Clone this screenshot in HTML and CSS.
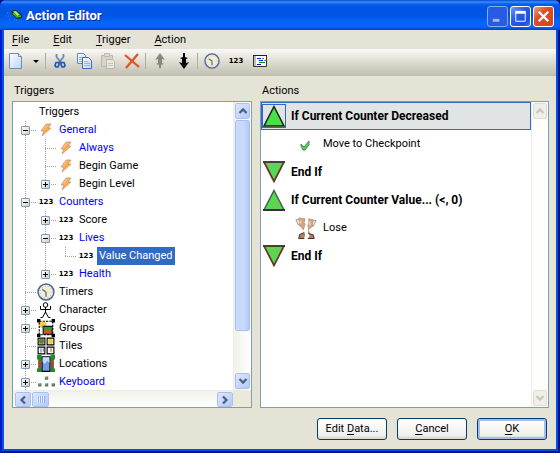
FILE: index.html
```html
<!DOCTYPE html>
<html lang="en">
<head>
<meta charset="utf-8">
<title>Action Editor</title>
<link rel="stylesheet" href="styles.css">
</head>
<body>
<svg class="defs" aria-hidden="true">
  <defs>
    <linearGradient id="boltFill" x1="0" y1="0" x2="1" y2="1"><stop offset="0" stop-color="#ffe6c0"/><stop offset=".5" stop-color="#f8a850"/><stop offset="1" stop-color="#ffd040"/></linearGradient>
    <linearGradient id="paper" x1="0" y1="0" x2="1" y2="1"><stop offset="0" stop-color="#fff"/><stop offset="1" stop-color="#b9d3fa"/></linearGradient>
    <pattern id="dots" width="4" height="4" patternUnits="userSpaceOnUse"><path fill="#48df48" d="M0 0h4v4H0z"/><path fill="#9fb592" d="M0 1h1v1H0zM2 3h1v1H2z"/></pattern>
    <symbol id="bolt" viewBox="0 0 16 16"><path d="M8 2h5l-3 4h3L4 14l2-5H3z" fill="url(#boltFill)" stroke="#c98a68" stroke-width=".7"/></symbol>
    <symbol id="clock" viewBox="0 0 17 17"><circle cx="8.500" cy="8.500" r="7.500" fill="#f1eed6" stroke="#4a62a0" stroke-width="1.400"/><circle cx="8.500" cy="8.500" r="5.500" fill="none" stroke="#c3bf9e" stroke-dasharray="1 2"/><path d="M5 6l3.500 2.500V13" fill="none" stroke="#68727c" stroke-width="1.300"/></symbol>
    <symbol id="up" viewBox="0 0 22 22"><path d="M11 1.500L21 21H1z" fill="#48df48" stroke="#112511" stroke-width="1.500"/></symbol>
    <symbol id="updots" viewBox="0 0 22 22"><path d="M11 1.500L21 21H1z" fill="url(#dots)" stroke="#48604b" stroke-width="1.500"/><path d="M0 21h22" stroke="#333" stroke-width="2"/></symbol>
    <symbol id="downdots" viewBox="0 0 22 22"><path d="M1 1h20L11 20.500z" fill="url(#dots)" stroke="#6b3328" stroke-width="1.700"/><path d="M0 1h22" stroke="#40322d" stroke-width="1.500"/></symbol>
    <symbol id="chev" viewBox="0 0 10 10"><path d="M1.500 7L5 3.500 8.500 7" fill="none" stroke="currentColor" stroke-width="2.300"/></symbol>
  </defs>
</svg>
<div class="window">
  <header class="titlebar">
    <svg class="appicon" viewBox="0 0 18 14"><path d="M1 4h4M0 7h5M3 10h2M8 11h3" stroke="#497fc4" stroke-dasharray="1 1"/><path d="M5 2l5-1 6 5v3l-5 1-5-5z" fill="#173615"/><path d="M7 2.500l3-.5 4 4-3 1z" fill="#a1ed62"/><path d="M7 4l4 4 4-1" fill="none" stroke="#45b638" stroke-width="1.500"/></svg>
    <h1>Action Editor</h1>
    <div class="controls">
      <button class="ctl min" aria-label="Minimize" disabled><svg viewBox="0 0 20 20"><path d="M5 14h7" stroke="#a4baf4" stroke-width="3"/></svg></button>
      <button class="ctl" aria-label="Maximize"><svg viewBox="0 0 20 20"><path d="M5 6h10v9H5z" fill="none" stroke="#fff"/><path d="M4.500 5.500h11" stroke="#fff" stroke-width="3"/></svg></button>
      <button class="ctl close" aria-label="Close"><svg viewBox="0 0 20 20"><path d="M5 5l10 10M15 5L5 15" stroke="#fff" stroke-width="2.500"/></svg></button>
    </div>
  </header>
  <nav class="menu">
    <button><u>F</u>ile</button><button><u>E</u>dit</button><button><u>T</u>rigger</button><button><u>A</u>ction</button>
  </nav>
  <div class="toolbar" role="toolbar">
    <button class="tool" aria-label="New"><svg viewBox="0 0 16 16"><path d="M1.500.5h9l3 3v12h-12z" fill="url(#paper)" stroke="#7189b8"/><path d="M10.500.5v3h3" fill="#dbe8fd" stroke="#7189b8"/></svg></button>
    <button class="tool drop" aria-label="New menu"><svg viewBox="0 0 8 16"><path d="M1 7h6L4 10z"/></svg></button>
    <span class="sep"></span>
    <button class="tool" aria-label="Cut"><svg viewBox="0 0 16 16"><path d="M4.500 1v3l5 6M11.500 1v3l-5 6" fill="none" stroke="#6484a8" stroke-width="1.700"/><path d="M4 9.500h3v2L6 14H4l-1-1.500zM9 9.500h3l1 3-1 1.500h-2l-1-2.500z" fill="none" stroke="#1f55b5" stroke-width="1.700"/></svg></button>
    <button class="tool" aria-label="Copy"><svg viewBox="0 0 16 16"><path d="M1.500.5h6l2 2v8h-8z" fill="url(#paper)" stroke="#6389cc"/><path d="M3 4.500h4M3 6.500h4M3 8.500h3" stroke="#8eb4eb"/><path d="M6.500 4.500h6l3 3v8h-9z" fill="url(#paper)" stroke="#426dbb"/><path d="M8 8.500h4M8 10.500h6M8 12.500h6" stroke="#8eb4eb"/></svg></button>
    <button class="tool" aria-label="Paste" disabled><svg viewBox="0 0 16 16"><path d="M1.500 2.500h11v11h-11z" fill="#d6d5c9" stroke="#b9b8ac"/><path d="M4.500.5h5v3h-5z" fill="#e1e0d6" stroke="#b9b8ac"/><path d="M6.500 6.500h6l2 2v7h-8z" fill="#e9e8df" stroke="#b9b8ac"/><path d="M8 10.500h5M8 12.500h5" stroke="#c6c5ba"/></svg></button>
    <button class="tool" aria-label="Delete"><svg viewBox="0 0 16 16"><path d="M1 2l14 12M14 1L2 15" stroke="#e0521f" stroke-width="2.200"/></svg></button>
    <span class="sep"></span>
    <button class="tool" aria-label="Move up" disabled><svg viewBox="0 0 16 16"><path d="M8 0l5 7-3-1v4l2 1-3 1v3H7v-3l-3-1 2-1V6L3 7z" fill="#858a79"/></svg></button>
    <button class="tool" aria-label="Move down"><svg viewBox="0 0 16 16"><path d="M8 16l5-7-3 1V6l2-1-3-1V0H7v4L4 5l2 1v4L3 9z"/></svg></button>
    <span class="sep"></span>
    <button class="tool" aria-label="Timer"><svg viewBox="0 0 17 17"><use href="#clock"/></svg></button>
    <button class="tool"><span class="num">123</span></button>
    <button class="tool" aria-label="Script"><svg viewBox="0 0 16 16"><path d="M1.500 2.500h13v11h-13z" fill="#fff" stroke="#333"/><path d="M2 3h2v10H2z" fill="#bcc0b8"/><path d="M1 2.500h14" stroke="#14148a"/><path d="M5 5.500h4M7 7.500h4M5 11.500h4" stroke="#11f"/><path d="M10 5.500h2M12 7.500h2" stroke="#777"/><path d="M7 9.500h6" stroke="#090"/></svg></button>
  </div>

  <main>
    <section class="col triggers">
      <h2>Triggers</h2>
      <div class="pane treepane">
        <ul class="tree">
          <li><i class="cell"></i><span class="label">Triggers</span></li>
          <li><i class="cell v h"><button aria-label="General" aria-expanded="true"></button></i><i class="cell"><svg><use href="#bolt"/></svg></i><span class="label new">General</span></li>
          <li><i class="cell v"></i><i class="cell v h"></i><i class="cell"><svg><use href="#bolt"/></svg></i><span class="label new">Always</span></li>
          <li><i class="cell v"></i><i class="cell v h"></i><i class="cell"><svg><use href="#bolt"/></svg></i><span class="label">Begin Game</span></li>
          <li><i class="cell v"></i><i class="cell e h"><button aria-label="Begin Level" aria-expanded="false"></button></i><i class="cell"><svg><use href="#bolt"/></svg></i><span class="label">Begin Level</span></li>
          <li><i class="cell v h"><button aria-label="Counters" aria-expanded="true"></button></i><i class="cell"><b class="num">123</b></i><span class="label new">Counters</span></li>
          <li><i class="cell v"></i><i class="cell v h"><button aria-label="Score" aria-expanded="false"></button></i><i class="cell"><b class="num">123</b></i><span class="label">Score</span></li>
          <li><i class="cell v"></i><i class="cell v h"><button aria-label="Lives" aria-expanded="true"></button></i><i class="cell"><b class="num">123</b></i><span class="label new">Lives</span></li>
          <li><i class="cell v"></i><i class="cell v"></i><i class="cell e h"></i><i class="cell"><b class="num">123</b></i><span class="label selected">Value Changed</span></li>
          <li><i class="cell v"></i><i class="cell e h"><button aria-label="Health" aria-expanded="false"></button></i><i class="cell"><b class="num">123</b></i><span class="label new">Health</span></li>
          <li><i class="cell v h"></i><i class="cell"><svg class="big"><use href="#clock"/></svg></i><span class="label">Timers</span></li>
          <li><i class="cell v h"><button aria-label="Character" aria-expanded="false"></button></i><i class="cell"><svg viewBox="0 0 16 16"><circle cx="7.500" cy="3" r="2.300" fill="#fff" stroke="#000"/><path d="M2.500 4v3.500h10V4M7.500 5v6M7.500 10l-3 5.500h-2M7.500 10l3 5.500h2" fill="none" stroke="#000"/></svg></i><span class="label">Character</span></li>
          <li><i class="cell v h"><button aria-label="Groups" aria-expanded="false"></button></i><i class="cell"><svg class="big" viewBox="0 0 16 16"><path d="M2 2h12v12H2z" fill="#fff" stroke="#000" stroke-dasharray="2 1"/><circle cx="5.500" cy="5.500" r="3" fill="#f7cb3c"/><path d="M5.500 6.500h8v7h-8z" fill="#c25a35" stroke="#111"/><path d="M6 7h7v2l-2 1-2-1-2 1-1-1z" fill="#2ca02d"/><path d="M0 0h3v3H0zM13 0h3v3h-3zM0 13h3v3H0zM13 13h3v3h-3z"/></svg></i><span class="label">Groups</span></li>
          <li><i class="cell v h"></i><i class="cell"><svg class="big" viewBox="0 0 16 16"><path d="M1 1h6v6H1zM9 1h6v6H9zM1 9h6v6H1zM9 9h6v6H9z" fill="#fff" stroke="#000"/><path d="M2 2h4v4H2z" fill="#b64f28"/><path d="M2 2h4v2L5 5 4 4 2 5z" fill="#2b9e2e"/><path d="M10 2h4v4h-4z" fill="#f1ca38"/><path d="M3 10h1v4H3zM5 10h1v3H5z" fill="#6786a8"/><path d="M12 10h1v3h-1z" fill="#b55e22"/></svg></i><span class="label">Tiles</span></li>
          <li><i class="cell v h"><button aria-label="Locations" aria-expanded="false"></button></i><i class="cell"><svg class="big" viewBox="0 0 16 16"><path d="M1 2h3v12H1zM12 2h3v12h-3z" fill="#8d532c"/><path d="M0 0h4v4H0zM12 0h4v4h-4zM0 12h4v3H0zM12 12h4v3h-4z" fill="#159326"/><path d="M4.500 1.500h7v13h-7z" fill="#6e9bee" stroke="#000"/><path d="M5 2h6v5L9 5 7 8 5 6z" fill="#c1dcfa"/></svg></i><span class="label">Locations</span></li>
          <li><i class="cell v h"><button aria-label="Keyboard" aria-expanded="false"></button></i><i class="cell"><svg class="big" viewBox="0 0 16 16"><path d="M7 3h3v3H7zM1 9h3v3H1zM7 9h3v3H7zM13 9h3v3h-3z" fill="#62785f"/><path d="M7 3h2v1H7zM1 9h2v1H1zM7 9h2v1H7zM13 9h2v1h-2z" fill="#b7cdb3"/></svg></i><span class="label new">Keyboard</span></li>
        </ul>
        <div class="vbar">
          <button class="arrow" aria-label="Scroll up"><svg><use href="#chev"/></svg></button>
          <div class="thumb"></div><div class="rest"></div>
          <button class="arrow down" aria-label="Scroll down"><svg><use href="#chev"/></svg></button>
        </div>
        <div class="hbar">
          <button class="arrow left" aria-label="Scroll left"><svg><use href="#chev"/></svg></button>
          <div class="thumb grip"></div><div class="rest"></div>
          <button class="arrow right" aria-label="Scroll right"><svg><use href="#chev"/></svg></button>
        </div>
        <div class="corner"></div>
      </div>
    </section>
    <section class="col actions">
      <h2>Actions</h2>
      <div class="pane actionpane">
        <ul class="list">
          <li class="current"><span class="pic"><svg><use href="#up"/></svg></span>If Current Counter Decreased</li>
          <li class="child"><span class="pic"><svg viewBox="0 0 22 22"><path d="M6 11l3 3 5-6v4l-4 5H8l-2-4z" fill="#45d556" stroke="#5d8463"/></svg></span>Move to Checkpoint</li>
          <li><span class="pic"><svg><use href="#downdots"/></svg></span>End If</li>
          <li><span class="pic"><svg><use href="#updots"/></svg></span>If Current Counter Value... (&lt;, 0)</li>
          <li class="child"><span class="pic"><svg viewBox="0 0 22 24"><path d="M3 3H0l3 6h3M19 4h3l-3 6h-3" fill="none" stroke="#899184"/><path d="M3 1l7 1-1 4 1 2-2 6-4-5z" fill="#dba37e" stroke="#9b8c78" stroke-width=".7"/><path d="M14 2l5 1-1 7-4 4-1-5 1-3z" fill="#dba37e" stroke="#9b8c78" stroke-width=".7"/><path d="M8 13l1 4-5 2-1 5h6l1-5M14 13l-1 5 2 2-2 4h7l-1-5-4-1z" fill="#b67a60"/><path d="M9 17l-5 2-1 4.500h6M14 18l5 1.500 1 4h-7" fill="none" stroke="#303030"/><path d="M5 4v3M15 5v4" stroke="#f4cfac" stroke-width="2"/></svg></span>Lose</li>
          <li><span class="pic"><svg><use href="#downdots"/></svg></span>End If</li>
        </ul>
        <div class="vbar off">
          <button class="arrow" aria-label="Scroll up" disabled><svg><use href="#chev"/></svg></button>
          <div class="rest"></div>
          <button class="arrow down" aria-label="Scroll down" disabled><svg><use href="#chev"/></svg></button>
        </div>
      </div>
    </section>
  </main>
  <footer>
    <button class="push">Edit <u>D</u>ata...</button><button class="push"><u>C</u>ancel</button><button class="push default"><u>O</u>K</button>
  </footer>
</div>
</body>
</html>
```
FILE: styles.css
```css
* { box-sizing: border-box; }
body { margin: 0; background: #00107c; font: 11px/18px Roboto, sans-serif; color: #000; }
button { font: inherit; color: inherit; padding: 0; margin: 0; border: 0; background: none; }
u { text-underline-offset: 2px; }
ul { list-style: none; margin: 0; padding: 0; }
h1, h2 { margin: 0; font: inherit; }
svg { display: block; }
.defs { position: absolute; width: 0; height: 0; }

.window {
  display: flex; flex-direction: column; height: 100vh; padding: 0 2px 2px;
  background: #e5e3d6; border: solid; border-width: 0 2px 2px;
  border-color: #0019cf #00138c #00138c #0019cf;
  border-radius: 6px 6px 0 0;
  box-shadow: inset 2px 0 #0855dd, inset -2px -2px #0050e0;
}
.titlebar {
  display: flex; flex: none; align-items: center; height: 30px; margin: 0 -4px; padding: 2px 6px 0 6px;
  border-radius: 6px 6px 0 0;
  background: linear-gradient(#0647c8 0, #3b8cfa 2px, #0860ed 4px, #0055e5 7px, #0055e5 16px, #0564fa 22px, #0564fa 27px, #0040cc 30px);
}
.appicon { width: 18px; height: 14px; }
h1 { flex: 1; padding-left: 2px; color: #fff; font: bold 13px/20px Roboto, sans-serif; text-shadow: 1px 1px #0a2a90; }
.controls { display: flex; gap: 2px; }
.ctl { width: 21px; height: 21px; border: 1px solid #fff; border-radius: 3px; background: linear-gradient(135deg, #6f9bfa, #2a5de4 40%, #1c52e0 80%, #3f7cff); }
.ctl svg { width: 19px; height: 19px; }
.ctl.min { border-color: #8aa9f3; background: #285be4; }
.ctl.close { background: linear-gradient(135deg, #eda080, #dd4d22 40%, #d74417); }

.menu { display: flex; flex: none; gap: 24px; height: 19px; padding-left: 8px; }

.toolbar { display: flex; flex: none; align-items: center; height: 27px; padding: 0 0 3px; background: linear-gradient(#faf9f6, #e0ded3 45%, #c0beb0); }
.tool { display: flex; align-items: center; justify-content: center; width: 24px; height: 22px; }
.tool svg { width: 16px; height: 16px; }
.tool.drop { width: 16px; }
.tool.drop svg { width: 8px; }
.sep { width: 1px; height: 16px; margin: 0 2px 0 1px; background: #b1afa0; }
.num { font: bold 7px/8px "DejaVu Sans", sans-serif; }

main { flex: 1; display: flex; gap: 8px; min-height: 0; padding: 6px 7px 0 8px; }
.col { display: flex; flex-direction: column; min-width: 0; }
.triggers { flex: 240; }
.actions { flex: 289; }
h2 { flex: none; height: 19px; padding-left: 2px; }
.pane { flex: 1; display: grid; min-height: 0; border: 1px solid #7f9db9; background: #fff; }
.treepane { grid-template: minmax(0, 1fr) 17px / minmax(0, 1fr) 18px; }
.actionpane { grid-template-columns: minmax(0, 1fr) 17px; }

.tree { overflow: hidden; padding: 1px 0 0 3px; }
.tree li { display: flex; height: 18px; white-space: nowrap; }
.cell { display: flex; flex: none; align-items: center; justify-content: center; width: 20px; font-style: normal; background-repeat: no-repeat; --dv: repeating-linear-gradient(#a5a396 0 1px, transparent 1px 2px); --dh: repeating-linear-gradient(90deg, #a5a396 0 1px, transparent 1px 2px); }
.cell svg { width: 16px; height: 16px; }
.cell svg.big { width: 18px; height: 18px; }
.v { background-image: var(--dv); background-size: 1px 18px; background-position: 9px 0; }
.v.h { background-image: var(--dv), var(--dh); background-size: 1px 18px, 11px 1px; background-position: 9px 0, 9px 9px; }
.e.h { background-image: var(--dv), var(--dh); background-size: 1px 9px, 11px 1px; background-position: 9px 0, 9px 9px; }
.cell button {
  width: 9px; height: 9px; margin: 1px 1px 0 0; border: 1px solid #7c9aba; border-radius: 1px;
  background: linear-gradient(#000, #000) center / 5px 1px no-repeat, linear-gradient(135deg, #fff, #d2cec0);
}
.cell button[aria-expanded="false"] {
  background: linear-gradient(#000, #000) center / 5px 1px no-repeat, linear-gradient(#000, #000) center / 1px 5px no-repeat, linear-gradient(135deg, #fff, #d2cec0);
}
.label { padding: 0 2px; margin-left: 1px; }
.new { color: #00f; }
.selected { background: #316ac5; color: #fff; }

.vbar, .hbar { display: flex; }
.vbar { flex-direction: column; padding: 1px; border-left: 1px solid #eeede5; background: linear-gradient(90deg, #f1f1ea, #fff); }
.hbar { padding: 1px 0 0 2px; border-top: 1px solid #eeede5; background: linear-gradient(#f1f1ea, #fff); }
.corner { background: #ece9d8; }
.arrow, .thumb { display: flex; flex: none; align-items: center; justify-content: center; border: 1px solid #fff; border-radius: 2px; outline: 1px solid #a9c1ee; outline-offset: -1px; background: linear-gradient(135deg, #dce7ff, #b5c9f7); color: #4d6185; }
.vbar .arrow { height: 16px; }
.hbar .arrow { width: 16px; }
.arrow svg { width: 10px; height: 10px; }
.down svg { transform: rotate(180deg); }
.left svg { transform: rotate(-90deg); }
.right svg { transform: rotate(90deg); }
.rest { flex: 43; }
.vbar .thumb { flex: 211; margin-top: 1px; background: linear-gradient(90deg, #c9d8fd 60%, #b4c8f6); }
.hbar .thumb { width: 17px; margin-left: 1px; }
.grip::before { content: ""; width: 8px; height: 7px; background: repeating-linear-gradient(90deg, #eef4fe 0 1px, #8cb0f8 1px 2px); }
.vbar.off { background: #fefefb; }
.off .arrow { outline-color: #dddcd0; background: #f0efe8; color: #c9c8bb; }

.list li { display: flex; align-items: center; gap: 5px; height: 28px; padding-left: 1px; font-size: 12px; font-weight: bold; white-space: nowrap; }
.list .child { padding-left: 33px; font-size: 11px; font-weight: normal; }
.pic { display: flex; align-items: center; justify-content: center; width: 24px; height: 24px; }
.pic svg { width: 22px; height: 22px; }
.list .current { padding-left: 0; border: 1px solid #316ac5; background: #e1e4e5; }
.current .pic { outline: 1px solid #316ac5; outline-offset: -1px; }

footer { display: flex; flex: none; justify-content: flex-end; gap: 10px; padding: 10px 9px 9px; }
.push { width: 70px; height: 22px; border: 1px solid #003c74; border-radius: 3px; background: linear-gradient(#fff, #f1f0ea 80%, #d9d4c8); }
.default { box-shadow: inset 0 0 0 2px #a3bdf2; }
```
